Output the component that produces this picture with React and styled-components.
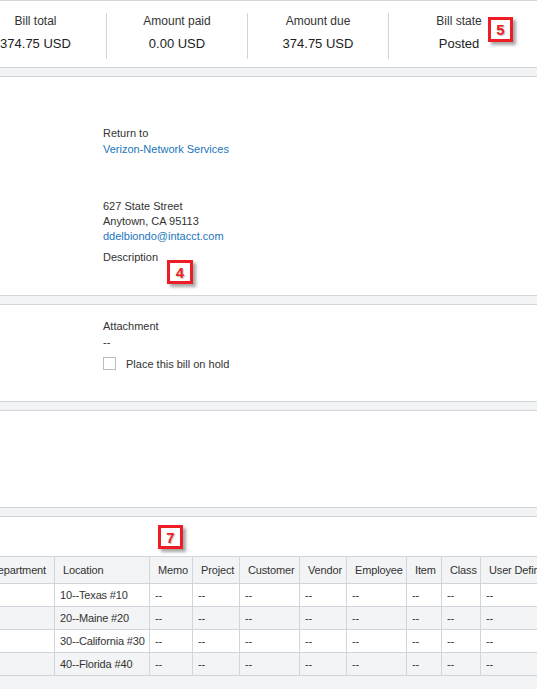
import React from 'react';
import styled, { createGlobalStyle } from 'styled-components';

const GlobalStyle = createGlobalStyle`
  html, body {
    margin: 0;
    padding: 0;
    background: #f2f4f5;
    font-family: "Liberation Sans", Arial, sans-serif;
    color: #333;
  }
`;

const Page = styled.div`
  position: relative;
  width: 537px;
  height: 689px;
  overflow: hidden;
  display: flex;
  flex-direction: column;
  gap: 8px;
`;

const Card = styled.section`
  background: #fff;
  border-top: 1px solid #d0d6db;
  border-bottom: 1px solid #d0d6db;
  height: ${props => props.h}px;
  box-sizing: border-box;
  flex-shrink: 0;
`;

const Summary = styled.div`
  display: grid;
  grid-template-columns: repeat(4, 141px);
  margin-left: -35px;
  padding-top: 12px;
`;

const Stat = styled.div`
  display: flex;
  flex-direction: column;
  align-items: center;
  height: 46px;
  border-left: ${props => props.first ? 'none' : '1px solid #d0d6db'};
`;

const StatLabel = styled.div`
  font-size: 12px;
  line-height: 16px;
  color: #333;
`;

const StatValue = styled.div`
  font-size: 13px;
  line-height: 16px;
  margin-top: 7px;
  color: #222;
`;

const Fields = styled.div`
  padding-left: 103px;
  padding-top: ${props => props.top}px;
  font-size: 11px;
`;

const Label = styled.div`
  line-height: 16px;
  color: #333;
  margin-top: ${props => props.mt || 0}px;
`;

const Link = styled.a`
  display: block;
  line-height: 16px;
  color: #1b75bb;
  text-decoration: none;
`;

const Address = styled.div`
  margin-top: 42px;
  line-height: 15px;
  color: #333;
`;

const Email = styled(Link)`
  line-height: 15px;
`;

const Value = styled.div`
  line-height: 15px;
  margin-top: 1px;
  color: #333;
`;

const CheckRow = styled.label`
  display: flex;
  align-items: center;
  gap: 10px;
  margin-top: 7px;
  color: #333;
`;

const Box = styled.span`
  width: 11px;
  height: 11px;
  border: 1px solid #b8bec3;
  background: #fff;
  flex-shrink: 0;
`;

const GridCard = styled.section`
  background: #fff;
  border-top: 1px solid #d0d6db;
  flex: 1;
  display: flex;
  flex-direction: column;
`;

const GridHead = styled.div`
  height: 39px;
  flex-shrink: 0;
`;

const GridBody = styled.div`
  flex: 1;
  background: #f2f4f5;
  overflow: hidden;
`;

const Table = styled.table`
  border-collapse: collapse;
  table-layout: fixed;
  margin-left: -19px;
  width: 639px;
  font-size: 11px;
  letter-spacing: -0.15px;
`;

const Th = styled.th`
  text-align: left;
  font-weight: normal;
  color: #333;
  background: #f2f4f5;
  height: 26px;
  padding: 0 4px 0 8px;
  border: 1px solid #d0d6db;
  white-space: nowrap;
  overflow: hidden;
`;

const Tr = styled.tr`
  background: ${props => props.alt ? '#f2f4f5' : '#fff'};
`;

const Td = styled.td`
  height: 22px;
  padding: 0 4px 0 5px;
  border: 1px solid #d0d6db;
  white-space: nowrap;
  overflow: hidden;
  color: #333;
`;

const Badge = styled.div`
  position: absolute;
  left: ${props => props.x}px;
  top: ${props => props.y}px;
  width: ${props => props.w}px;
  height: ${props => props.h}px;
  box-sizing: border-box;
  border: 3px solid #ee1c24;
  background: #fff;
  box-shadow: 3px 3px 3px rgba(0, 0, 0, 0.35);
  display: flex;
  align-items: center;
  justify-content: center;
  font-family: "Liberation Sans", Arial, sans-serif;
  font-weight: bold;
  font-size: 15px;
  color: #ee1c24;
  text-shadow: 1px 1px 1px rgba(0, 0, 0, 0.25);
`;

const stats = [
  ['Bill total', '374.75 USD'],
  ['Amount paid', '0.00 USD'],
  ['Amount due', '374.75 USD'],
  ['Bill state', 'Posted'],
];

const columns = [
  ['Department', 73],
  ['Location', 95],
  ['Memo', 43],
  ['Project', 47],
  ['Customer', 60],
  ['Vendor', 47],
  ['Employee', 60],
  ['Item', 35],
  ['Class', 39],
  ['User Defined Dimension', 140],
];

const locations = ['10--Texas #10', '20--Maine #20', '30--California #30', '40--Florida #40'];

export default function App() {
  return (
    <>
      <GlobalStyle />
      <Page>
        <Card h={68}>
          <Summary>
            {stats.map(([label, value], i) => (
              <Stat key={label} first={i === 0}>
                <StatLabel>{label}</StatLabel>
                <StatValue>{value}</StatValue>
              </Stat>
            ))}
          </Summary>
        </Card>

        <Card h={220}>
          <Fields top={48}>
            <Label>Return to</Label>
            <Link href="#">Verizon-Network Services</Link>
            <Address>
              627 State Street<br />
              Anytown, CA 95113
            </Address>
            <Email href="#">ddelbiondo@intacct.com</Email>
            <Label mt={5}>Description</Label>
          </Fields>
        </Card>

        <Card h={98}>
          <Fields top={13}>
            <Label>Attachment</Label>
            <Value>--</Value>
            <CheckRow>
              <Box />
              Place this bill on hold
            </CheckRow>
          </Fields>
        </Card>

        <Card h={98} />

        <GridCard>
          <GridHead />
          <GridBody>
            <Table>
              <colgroup>
                {columns.map(([name, w]) => <col key={name} style={{ width: w }} />)}
              </colgroup>
              <thead>
                <tr>
                  {columns.map(([name]) => <Th key={name}>{name}</Th>)}
                </tr>
              </thead>
              <tbody>
                {locations.map((loc, i) => (
                  <Tr key={loc} alt={i % 2 === 1}>
                    <Td />
                    <Td>{loc}</Td>
                    {columns.slice(2).map(([name]) => <Td key={name}>--</Td>)}
                  </Tr>
                ))}
              </tbody>
            </Table>
          </GridBody>
        </GridCard>

        <Badge x={488} y={17} w={25} h={25}>5</Badge>
        <Badge x={167} y={260} w={26} h={24}>4</Badge>
        <Badge x={158} y={525} w={25} h={24}>7</Badge>
      </Page>
    </>
  );
}
